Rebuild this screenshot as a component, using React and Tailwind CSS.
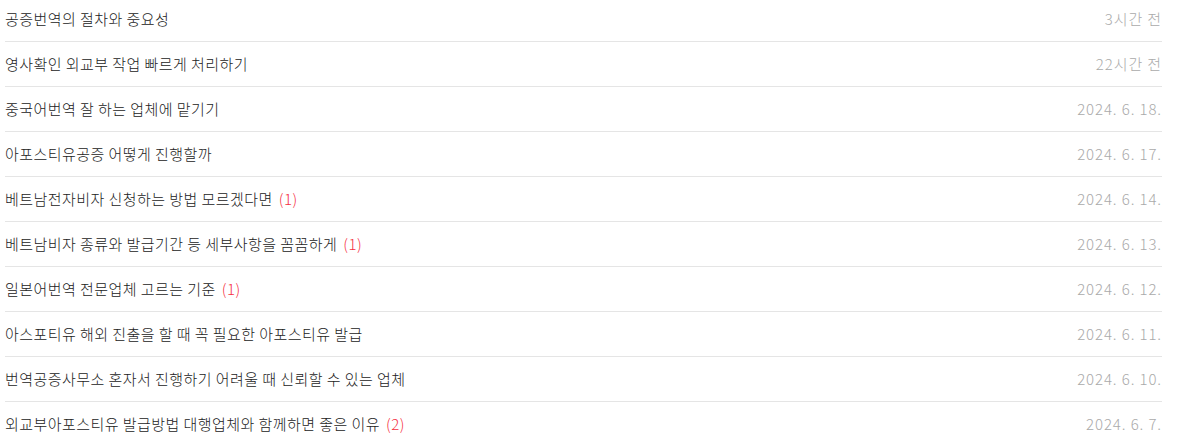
const posts = [
  { title: "공증번역의 절차와 중요성", date: "3시간 전" },
  { title: "영사확인 외교부 작업 빠르게 처리하기", date: "22시간 전" },
  { title: "중국어번역 잘 하는 업체에 맡기기", date: "2024. 6. 18." },
  { title: "아포스티유공증 어떻게 진행할까", date: "2024. 6. 17." },
  { title: "베트남전자비자 신청하는 방법 모르겠다면", count: 1, date: "2024. 6. 14." },
  { title: "베트남비자 종류와 발급기간 등 세부사항을 꼼꼼하게", count: 1, date: "2024. 6. 13." },
  { title: "일본어번역 전문업체 고르는 기준", count: 1, date: "2024. 6. 12." },
  { title: "아스포티유 해외 진출을 할 때 꼭 필요한 아포스티유 발급", date: "2024. 6. 11." },
  { title: "번역공증사무소 혼자서 진행하기 어려울 때 신뢰할 수 있는 업체", date: "2024. 6. 10." },
  { title: "외교부아포스티유 발급방법 대행업체와 함께하면 좋은 이유", count: 2, date: "2024. 6. 7." },
];

export default function App() {
  return (
    <div
      className="w-[1179px] h-[444px] overflow-hidden bg-white"
      style={{ fontFamily: '"Noto Sans CJK KR", "Noto Sans", sans-serif' }}
    >
      <ul className="ml-[5px] w-[1157px] -mt-[3px]">
        {posts.map((post, i) => (
          <li
            key={i}
            className="flex items-center justify-between h-[45px] border-b border-[#e5e5e5] text-[15px] font-light"
          >
            <span className="text-[#222] tracking-[0.03em]">
              {post.title}
              {post.count && (
                <span className="ml-[6px] text-[#f5303f]">({post.count})</span>
              )}
            </span>
            <span className="text-[#aaa] tracking-[0.06em]">{post.date}</span>
          </li>
        ))}
      </ul>
    </div>
  );
}
